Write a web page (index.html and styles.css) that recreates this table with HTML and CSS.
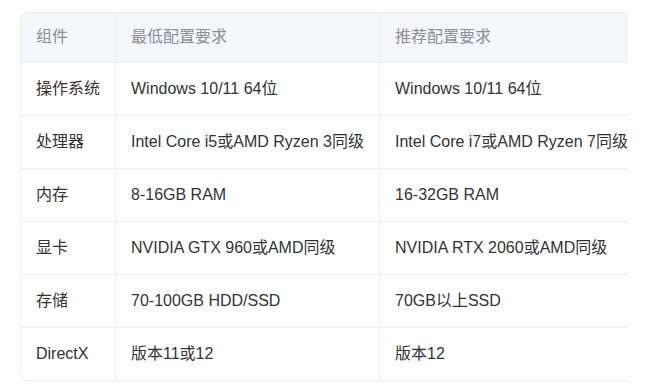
FILE: index.html
```html
<!DOCTYPE html>
<html lang="zh-CN">
<head>
<meta charset="utf-8">
<link rel="stylesheet" href="styles.css">
</head>
<body>
<div class="clip">
  <div class="card">
    <table class="spec">
      <colgroup>
        <col class="c1"><col class="c2"><col class="c3">
      </colgroup>
      <thead>
        <tr><th>组件</th><th>最低配置要求</th><th>推荐配置要求</th></tr>
      </thead>
      <tbody>
        <tr><td>操作系统</td><td>Windows 10/11 64位</td><td>Windows 10/11 64位</td></tr>
        <tr><td>处理器</td><td>Intel Core i5或AMD Ryzen 3同级</td><td>Intel Core i7或AMD Ryzen 7同级</td></tr>
        <tr><td>内存</td><td>8-16GB RAM</td><td>16-32GB RAM</td></tr>
        <tr><td>显卡</td><td>NVIDIA GTX 960或AMD同级</td><td>NVIDIA RTX 2060或AMD同级</td></tr>
        <tr><td>存储</td><td>70-100GB HDD/SSD</td><td>70GB以上SSD</td></tr>
        <tr><td>DirectX</td><td>版本11或12</td><td>版本12</td></tr>
      </tbody>
    </table>
  </div>
</div>
</body>
</html>
```
FILE: styles.css
```css
html, body {
  margin: 0;
  padding: 0;
  background: #ffffff;
}
body {
  padding: 12px 0 0 20px;
  font-family: "Liberation Sans", Arial, "Noto Sans CJK SC", sans-serif;
  font-size: 16px;
  color: #333333;
}
.clip {
  width: 608px;
  overflow: hidden;
}
.card {
  display: inline-block;
  border: 1px solid #ebedf0;
  border-radius: 8px;
  overflow: hidden;
}
.spec {
  border-collapse: separate;
  border-spacing: 0;
  table-layout: fixed;
  width: 623px;
}
.c1 { width: 95px; }
.c2 { width: 264px; }
.c3 { width: 264px; }
.spec th, .spec td {
  text-align: left;
  padding: 0 15px;
  line-height: 24px;
  white-space: nowrap;
  border-right: 1px solid #ebedf0;
  border-bottom: 1px solid #ebedf0;
}
.spec th:last-child, .spec td:last-child {
  border-right: none;
}
.spec tbody tr:last-child td {
  border-bottom: none;
}
.spec th {
  background: #f5f6f9;
  color: #8a8e96;
  font-weight: normal;
  padding-top: 12px;
  padding-bottom: 13px;
}
.spec td {
  padding-top: 14px;
  padding-bottom: 14px;
}
```
